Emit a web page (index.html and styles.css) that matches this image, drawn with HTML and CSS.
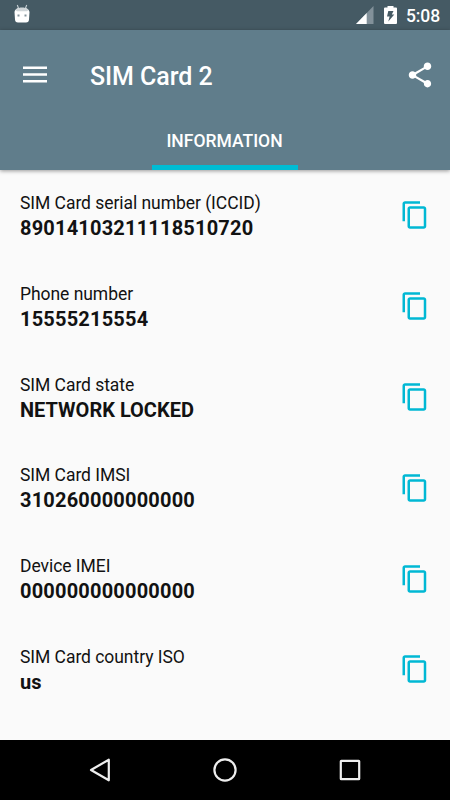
FILE: index.html
```html
<!DOCTYPE html>
<html lang="en">
<head>
<meta charset="utf-8">
<title>SIM Card 2</title>
<link rel="stylesheet" href="styles.css">
</head>
<body>
<svg class="defs" aria-hidden="true">
  <symbol id="copy" viewBox="0 0 24 24"><path d="M16 1H4c-1.100 0-2 .9-2 2v14h2V3h12V1zm3 4H8c-1.100 0-2 .9-2 2v14c0 1.100.9 2 2 2h11c1.100 0 2-.9 2-2V7c0-1.100-.9-2-2-2zm0 16H8V7h11v14z"/></symbol>
</svg>
<div class="screen">
  <div class="status">
    <svg class="debug" width="16" height="20" viewBox="0 0 16 20">
      <path d="M3.300 1l1.500 4M12.700 1l-1.500 4" stroke="#c5ced3" stroke-width="1.100" fill="none"/>
      <path d="M.5 8C1.200 4.500 4 3.700 8 3.700s6.800.8 7.500 4.300l-.5 7.500c-.1 2-1 2.900-3 2.900H4c-2 0-2.900-.9-3-2.900z" fill="#fff"/>
      <path d="M1.500 6C2.500 4.200 5 3.700 8 3.700s5.500.5 6.500 2.300L13 7.300H3z" fill="#cfd5d8"/>
      <path d="M3.500 10.500h2v2h-2zM10.500 10.500h2v2h-2z" fill="#84939b"/>
    </svg>
    <svg class="signal" width="18" height="18" viewBox="0 0 18 18"><path d="M17.500 0v18H0z" fill="#82919a"/><path d="M10.700 7v11H0z" fill="#fff"/></svg>
    <svg class="battery" width="13" height="18" viewBox="0 0 13 18"><path d="M3.500 0h6v1.500h2.500q1 0 1 1V17q0 1-1 1H1q-1 0-1-1V2.500q0-1 1-1h2.500z" fill="#fff"/><path d="M4.300 5h5.200L7.800 8.400h2.500l-6 7.100 1.300-5H3z" fill="#455a64"/></svg>
    <span class="time">5:08</span>
  </div>
  <header class="appbar">
    <div class="toolbar">
      <svg class="menu" width="24" height="18" viewBox="0 0 24 18"><path d="M0 1.700h24M0 8.500h24M0 15.300h24" stroke="#fff" stroke-width="2.500"/></svg>
      <h1 class="title">SIM Card 2</h1>
      <svg class="share" width="30" height="30" viewBox="0 0 24 24" fill="#fff"><path d="M18 16.080c-.76 0-1.440.3-1.960.77L8.910 12.700c.05-.23.09-.46.09-.7s-.04-.47-.09-.7l7.050-4.110c.54.5 1.250.81 2.040.81 1.660 0 3-1.340 3-3s-1.340-3-3-3-3 1.340-3 3c0 .24.04.47.09.7L8.040 9.810C7.500 9.310 6.790 9 6 9c-1.660 0-3 1.340-3 3s1.340 3 3 3c.79 0 1.500-.31 2.040-.81l7.120 4.160c-.05.21-.08.43-.08.65 0 1.610 1.310 2.920 2.920 2.920s2.920-1.310 2.920-2.920-1.310-2.920-2.920-2.920z"/></svg>
    </div>
    <div class="tabs"><div class="tab">INFORMATION</div></div>
  </header>
  <main class="list">
    <div class="row"><div class="text"><div class="label">SIM Card serial number (ICCID)</div><div class="value digits">89014103211118510720</div></div><svg class="copy"><use href="#copy"/></svg></div>
    <div class="row"><div class="text"><div class="label">Phone number</div><div class="value digits">15555215554</div></div><svg class="copy"><use href="#copy"/></svg></div>
    <div class="row"><div class="text"><div class="label">SIM Card state</div><div class="value">NETWORK LOCKED</div></div><svg class="copy"><use href="#copy"/></svg></div>
    <div class="row"><div class="text"><div class="label">SIM Card IMSI</div><div class="value digits">310260000000000</div></div><svg class="copy"><use href="#copy"/></svg></div>
    <div class="row"><div class="text"><div class="label">Device IMEI</div><div class="value digits">000000000000000</div></div><svg class="copy"><use href="#copy"/></svg></div>
    <div class="row"><div class="text"><div class="label">SIM Card country ISO</div><div class="value">us</div></div><svg class="copy"><use href="#copy"/></svg></div>
  </main>
  <nav class="navbar">
    <svg width="24" height="26" viewBox="0 0 24 26"><path d="M20.800 2.700v20.600L3 13z"/></svg>
    <svg width="26" height="26" viewBox="0 0 26 26"><circle cx="13" cy="13" r="10.600"/></svg>
    <svg width="24" height="26" viewBox="0 0 24 26"><rect x="2.800" y="3.800" width="18.400" height="18.400" rx=".5"/></svg>
  </nav>
</div>
</body>
</html>
```
FILE: styles.css
```css
* { box-sizing: border-box; }
body { margin: 0; font-family: Roboto, "Liberation Sans", sans-serif; }
.defs { display: none; }
.screen { width: 450px; height: 800px; display: flex; flex-direction: column; background: #fafafa; overflow: hidden; }
.status { height: 30px; flex: none; display: flex; align-items: center; background: #455a64; padding: 0 10px 0 14px; color: #fff; }
.debug { margin-top: -3px; }
.signal { margin-left: auto; margin-right: 10px; }
.battery { margin-right: 9px; }
.time { font-size: 17.5px; font-weight: 500; line-height: 30px; width: 34px; white-space: nowrap; margin-top: 2px; letter-spacing: -.1px; }
.appbar { height: 140px; flex: none; background: #607d8b; color: #fff; box-shadow: 0 1px 4px rgba(0,0,0,.4); display: flex; flex-direction: column; }
.toolbar { height: 90px; display: flex; align-items: center; padding: 0 15px 0 23px; }
.title { margin: 0 auto 0 43px; font-size: 25px; font-weight: 500; line-height: 30px; padding-top: 4px; letter-spacing: -.05px; }
.tabs { height: 50px; display: flex; justify-content: center; }
.tab { width: 146px; height: 50px; margin-right: 1px; border-bottom: 5px solid #00bcd4; text-align: center; font-size: 17.5px; font-weight: 500; line-height: 42px; white-space: nowrap; }
.list { flex: 1; min-height: 0; }
.row { height: 90.8px; display: flex; justify-content: space-between; align-items: center; padding: 0 20.5px 0 20px; }
.text { color: #121212; white-space: nowrap; padding-top: 1.6px; }
.label { font-size: 17.5px; line-height: 25px; letter-spacing: -.05px; }
.value { font-size: 20px; font-weight: 700; line-height: 25.4px; }
.digits { letter-spacing: .19px; }
.copy { width: 30px; height: 30px; fill: #00b8d4; }
.navbar { height: 60px; flex: none; background: #000; display: flex; align-items: center; justify-content: space-between; padding: 0 88px; }
.navbar svg { fill: none; stroke: #eee; stroke-width: 2.200; stroke-linejoin: round; }
```
